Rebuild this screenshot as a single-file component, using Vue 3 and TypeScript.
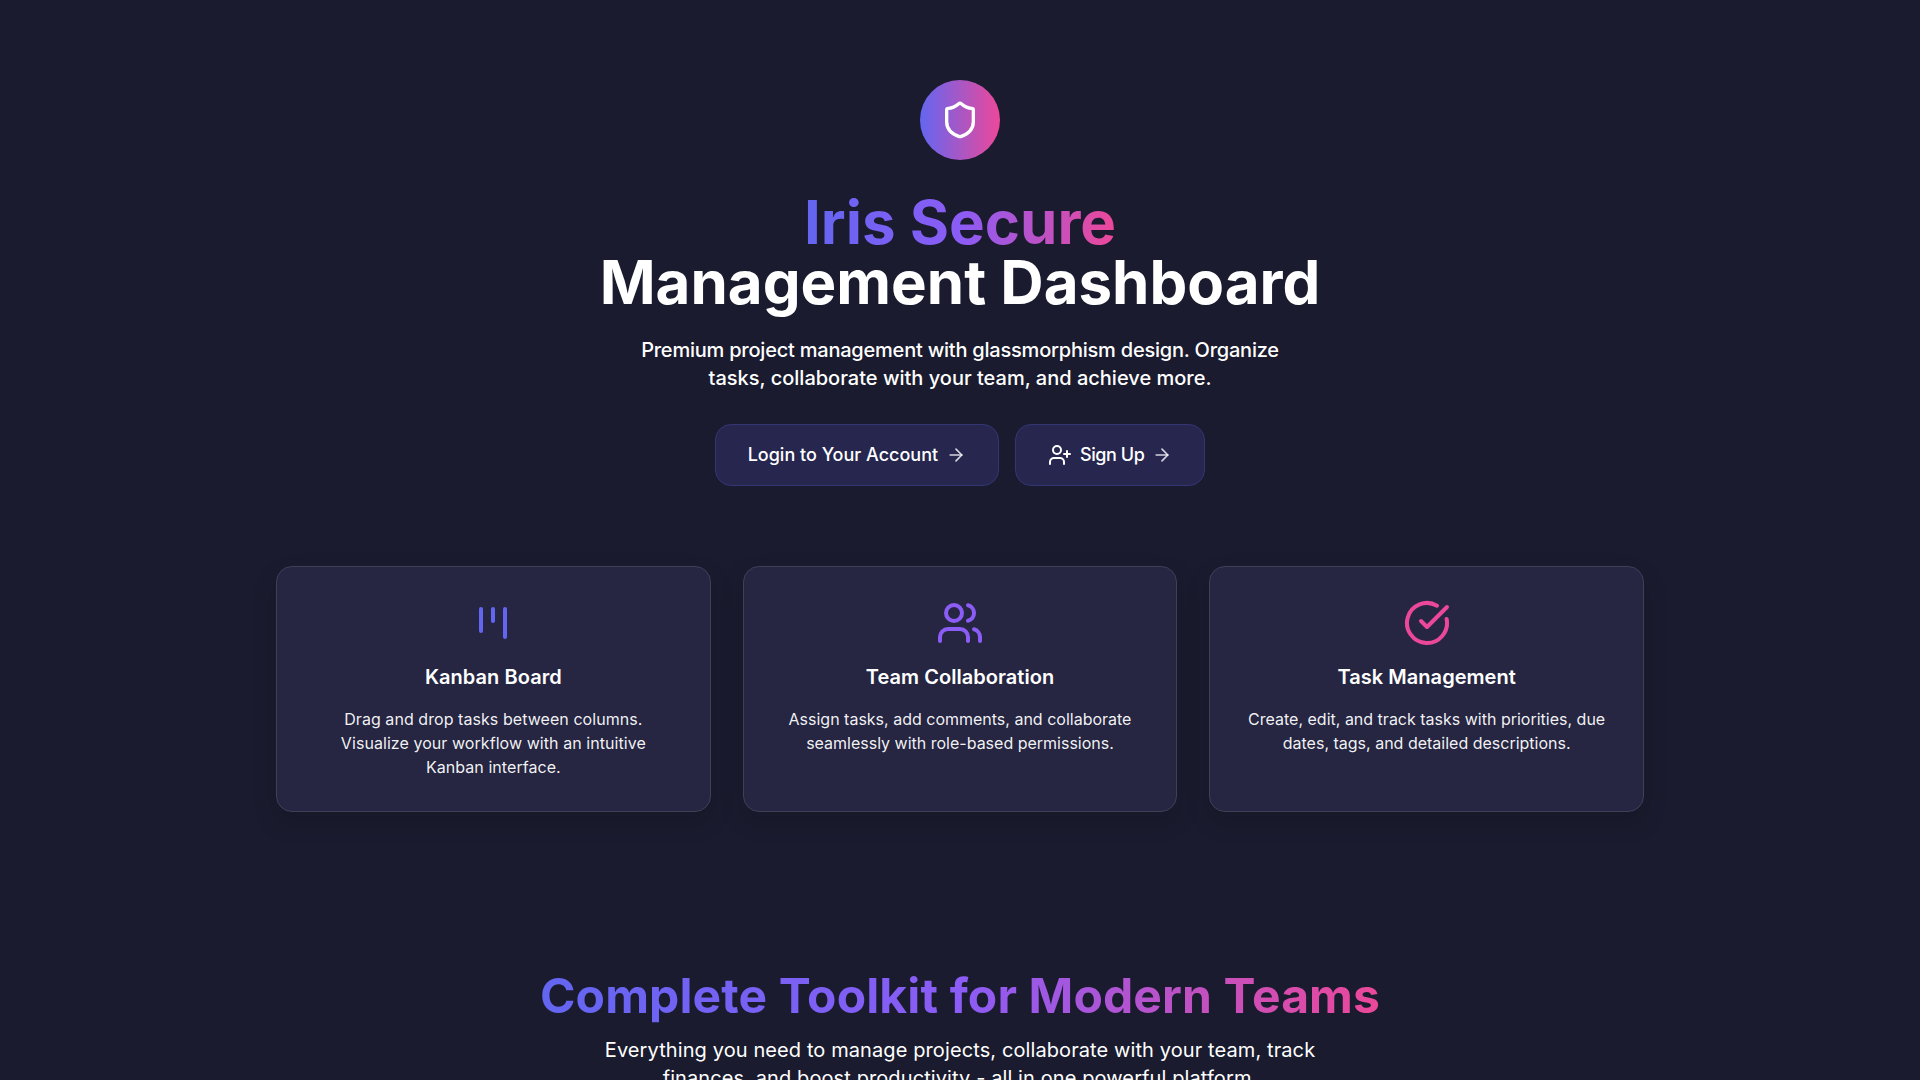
<script setup lang="ts">
interface Feature {
  title: string;
  text: string;
  kind: 'kanban' | 'users' | 'check';
}
const features: Feature[] = [
  { title: 'Kanban Board', text: 'Drag and drop tasks between columns. Visualize your workflow with an intuitive Kanban interface.', kind: 'kanban' },
  { title: 'Team Collaboration', text: 'Assign tasks, add comments, and collaborate seamlessly with role-based permissions.', kind: 'users' },
  { title: 'Task Management', text: 'Create, edit, and track tasks with priorities, due dates, tags, and detailed descriptions.', kind: 'check' },
];
</script>

<template>
  <main class="page">
    <section class="hero">
      <div class="logo">
        <svg width="40" height="40" viewBox="0 0 24 24" fill="none" stroke="#fff" stroke-width="2" stroke-linecap="round" stroke-linejoin="round">
          <path d="M20 13c0 5-3.5 7.5-7.66 8.95a1 1 0 0 1-.67-.01C7.5 20.5 4 18 4 13V6a1 1 0 0 1 1-1c2 0 4.5-1.2 6.24-2.72a1.17 1.17 0 0 1 1.52 0C14.51 3.81 17 5 19 5a1 1 0 0 1 1 1z" />
        </svg>
      </div>
      <h1 class="title">
        <span class="gradient">Iris Secure</span>
        <span class="title-line">Management Dashboard</span>
      </h1>
      <p class="lead lead-hero"><span class="lead-first">Premium project management with glassmorphism design. Organize</span> tasks, collaborate with your team, and achieve more.</p>
      <div class="actions">
        <button class="btn" type="button">
          <span class="label">Login to Your Account</span>
          <svg class="arrow" width="20" height="20" viewBox="0 0 24 24" fill="none" stroke="currentColor" stroke-width="2" stroke-linecap="round" stroke-linejoin="round"><path d="M5 12h14" /><path d="m12 5 7 7-7 7" /></svg>
        </button>
        <button class="btn" type="button">
          <svg width="24" height="24" viewBox="0 0 24 24" fill="none" stroke="currentColor" stroke-width="2" stroke-linecap="round" stroke-linejoin="round"><path d="M16 21v-2a4 4 0 0 0-4-4H6a4 4 0 0 0-4 4v2" /><circle cx="9" cy="7" r="4" /><line x1="19" x2="19" y1="8" y2="14" /><line x1="22" x2="16" y1="11" y2="11" /></svg>
          <span class="label signup-label">Sign Up</span>
          <svg class="arrow" width="20" height="20" viewBox="0 0 24 24" fill="none" stroke="currentColor" stroke-width="2" stroke-linecap="round" stroke-linejoin="round"><path d="M5 12h14" /><path d="m12 5 7 7-7 7" /></svg>
        </button>
      </div>
    </section>

    <section class="cards">
      <article v-for="f in features" :key="f.title" class="card">
        <svg v-if="f.kind === 'kanban'" class="icon kanban" width="48" height="48" viewBox="0 0 24 24" fill="none" stroke="currentColor" stroke-width="2" stroke-linecap="round" stroke-linejoin="round"><path d="M6 5v11" /><path d="M12 5v6" /><path d="M18 5v14" /></svg>
        <svg v-else-if="f.kind === 'users'" class="icon users" width="48" height="48" viewBox="0 0 24 24" fill="none" stroke="currentColor" stroke-width="2" stroke-linecap="round" stroke-linejoin="round"><path d="M16 21v-2a4 4 0 0 0-4-4H6a4 4 0 0 0-4 4v2" /><circle cx="9" cy="7" r="4" /><path d="M22 21v-2a4 4 0 0 0-3-3.87" /><path d="M16 3.13a4 4 0 0 1 0 7.75" /></svg>
        <svg v-else class="icon check" width="48" height="48" viewBox="0 0 24 24" fill="none" stroke="currentColor" stroke-width="2" stroke-linecap="round" stroke-linejoin="round"><path d="M21.801 10A10 10 0 1 1 17 3.335" /><path d="m9 11 3 3L22 4" /></svg>
        <h3 class="card-title">{{ f.title }}</h3>
        <p class="card-text" :class="{ 'card-text-wide': f.kind === 'kanban' }">{{ f.text }}</p>
      </article>
    </section>

    <section class="toolkit">
      <h2 class="toolkit-title"><span class="gradient">Complete Toolkit for Modern Teams</span></h2>
      <p class="lead lead-wide">Everything you need to manage projects, collaborate with your team, track finances, and boost productivity - all in one powerful platform.</p>
    </section>
  </main>
</template>

<style scoped>
.page {
  box-sizing: border-box;
  min-height: 1080px;
  padding: 80px 16px 80px;
  background: #1a1b2e;
  color: #fff;
  font-family: Inter, "Liberation Sans", sans-serif;
  display: flex;
  flex-direction: column;
  align-items: center;
}
.hero {
  display: flex;
  flex-direction: column;
  align-items: center;
  text-align: center;
}
.logo {
  width: 80px;
  height: 80px;
  border-radius: 50%;
  background: linear-gradient(to right, #6366f1, #ec4899);
  display: flex;
  align-items: center;
  justify-content: center;
  margin-bottom: 32px;
}
.title {
  margin: 0 0 24px;
  font-size: 60px;
  line-height: 60px;
  font-weight: 700;
  display: flex;
  flex-direction: column;
  align-items: center;
}
.gradient {
  background: linear-gradient(to right, #6366f1, #8b5cf6, #ec4899);
  -webkit-background-clip: text;
  background-clip: text;
  color: transparent;
}
.lead {
  margin: 0;
  font-size: 20px;
  line-height: 28px;
  text-align: center;
  color: #fff;
}
.lead-hero {
  max-width: 672px;
  font-weight: 500;
}
.lead-first {
  letter-spacing: -0.22px;
}
.lead-wide {
  max-width: 768px;
  letter-spacing: 0.1px;
}
.actions {
  display: flex;
  gap: 16px;
  margin-top: 32px;
}
.btn {
  display: flex;
  align-items: center;
  gap: 8px;
  height: 62px;
  padding: 0 32px;
  border-radius: 16px;
  border: 1px solid #343674;
  background: #26264f;
  color: #fff;
  font-family: inherit;
  font-size: 18px;
  font-weight: 500;
}
.label {
  margin-bottom: 2px;
}
.signup-label {
  letter-spacing: -0.45px;
}
.arrow {
  color: rgba(255, 255, 255, 0.8);
}
.cards {
  display: grid;
  grid-template-columns: repeat(3, 1fr);
  gap: 32px;
  width: 1368px;
  margin-top: 80px;
}
.card {
  box-sizing: border-box;
  height: 246px;
  padding: 32px;
  border-radius: 16px;
  background: #262642;
  border: 1px solid #3f3f58;
  box-shadow: 0 10px 25px rgba(0, 0, 0, 0.15);
  display: flex;
  flex-direction: column;
  align-items: center;
  text-align: center;
}
.icon {
  flex: none;
  margin-bottom: 16px;
}
.kanban { color: #6366f1; }
.users { color: #8b5cf6; }
.check { color: #ec4899; }
.card-title {
  margin: 0 0 16px;
  font-size: 20px;
  line-height: 28px;
  font-weight: 600;
  letter-spacing: 0.05px;
}
.card-text {
  margin: 0;
  max-width: 362px;
  font-size: 16px;
  line-height: 24px;
  color: rgba(255, 255, 255, 0.95);
}
.card-text-wide {
  letter-spacing: 0.06px;
}
.toolkit {
  margin-top: 160px;
  display: flex;
  flex-direction: column;
  align-items: center;
}
.toolkit-title {
  margin: 0 0 16px;
  font-size: 48px;
  line-height: 48px;
  font-weight: 700;
  letter-spacing: 0.12px;
}
</style>

<style>
html, body { margin: 0; background: #1a1b2e; overflow: hidden; }
</style>
